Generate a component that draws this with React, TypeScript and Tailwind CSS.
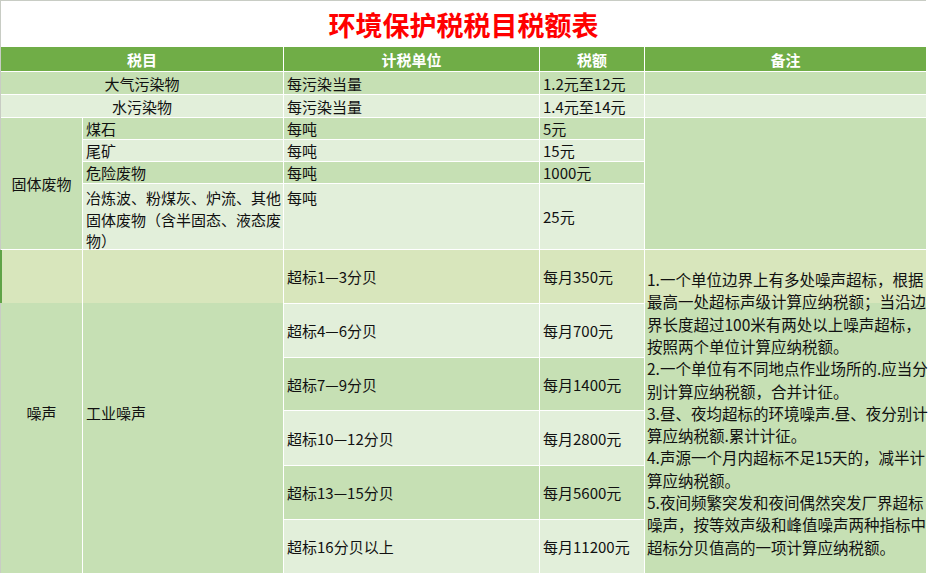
const DARK = 'bg-[#c6e0b4]';
const LIGHT = 'bg-[#e2efda]';
const HI = 'bg-[#d8e6bc]';

const noiseRows = [
  { level: '超标4—6分贝', tax: '每月700元', bg: LIGHT },
  { level: '超标7—9分贝', tax: '每月1400元', bg: DARK },
  { level: '超标10—12分贝', tax: '每月2800元', bg: LIGHT },
  { level: '超标13—15分贝', tax: '每月5600元', bg: DARK },
  { level: '超标16分贝以上', tax: '每月11200元', bg: LIGHT },
];

const notes = [
  '1.一个单位边界上有多处噪声超标，根据',
  '最高一处超标声级计算应纳税额；当沿边',
  '界长度超过100米有两处以上噪声超标，',
  '按照两个单位计算应纳税额。',
  '2.一个单位有不同地点作业场所的.应当分',
  '别计算应纳税额，合并计征。',
  '3.昼、夜均超标的环境噪声.昼、夜分别计',
  '算应纳税额.累计计征。',
  '4.声源一个月内超标不足15天的，减半计',
  '算应纳税额。',
  '5.夜间频繁突发和夜间偶然突发厂界超标',
  '噪声，按等效声级和峰值噪声两种指标中',
  '超标分贝值高的一项计算应纳税额。',
];

const solid = [
  { name: '煤石', tax: '5元', bg: DARK },
  { name: '尾矿', tax: '15元', bg: LIGHT },
  { name: '危险废物', tax: '1000元', bg: DARK },
];

function Cell({ className = '', children }: { className?: string; children?: React.ReactNode }) {
  return <div className={`flex items-center pl-[3px] whitespace-nowrap ${className}`}>{children}</div>;
}

export default function App() {
  return (
    <div
      className="w-[929px] h-[577px] bg-white text-[15px] text-[#111] overflow-hidden"
      style={{ fontFamily: '"Noto Sans CJK SC", "Noto Sans", sans-serif' }}
    >
      <div className="w-[926px] border-t border-l border-[#c8ccc4]">
        {/* title */}
        <div className="h-[46px] flex items-center justify-center pt-[1px]">
          <h1 className="text-[27px] font-bold text-[#ff0000] leading-none">环境保护税税目税额表</h1>
        </div>

        <div className="grid gap-px bg-white grid-cols-[81px_200px_255px_104px_281px] grid-rows-[24px_22px_22px_21px_21px_21px_65px_53px_53px_52px_54px_53px_53px] leading-none">
          {/* header */}
          <div className="col-span-2 bg-[#70ad47] text-white font-bold flex items-center justify-center">税目</div>
          <div className="bg-[#70ad47] text-white font-bold flex items-center justify-center">计税单位</div>
          <div className="bg-[#70ad47] text-white font-bold flex items-center justify-center">税额</div>
          <div className="bg-[#70ad47] text-white font-bold flex items-center justify-center">备注</div>

          {/* air / water */}
          <div className={`col-span-2 flex items-center justify-center ${DARK}`}>大气污染物</div>
          <Cell className={DARK}>每污染当量</Cell>
          <Cell className={DARK}>1.2元至12元</Cell>
          <div className={DARK} />
          <div className={`col-span-2 flex items-center justify-center ${LIGHT}`}>水污染物</div>
          <Cell className={LIGHT}>每污染当量</Cell>
          <Cell className={LIGHT}>1.4元至14元</Cell>
          <div className={LIGHT} />

          {/* solid waste */}
          <div className={`row-span-4 flex items-center justify-center ${DARK}`}>固体废物</div>
          <Cell className={solid[0].bg}>{solid[0].name}</Cell>
          <Cell className={solid[0].bg}>每吨</Cell>
          <Cell className={solid[0].bg}>{solid[0].tax}</Cell>
          <div className={`row-span-4 ${DARK}`} />
          {solid.slice(1).map((r) => (
            <>
              <Cell key={r.name + 'a'} className={r.bg}>{r.name}</Cell>
              <Cell key={r.name + 'b'} className={r.bg}>每吨</Cell>
              <Cell key={r.name + 'c'} className={r.bg}>{r.tax}</Cell>
            </>
          ))}
          <div className={`pl-[3px] pt-[3px] leading-[21.5px] ${LIGHT}`}>
            冶炼波、粉煤灰、炉流、其他
            <br />
            固体废物（含半固态、液态废
            <br />
            物）
          </div>
          <div className={`pl-[3px] pt-[3px] leading-[21.5px] ${LIGHT}`}>每吨</div>
          <Cell className={LIGHT}>25元</Cell>

          {/* noise */}
          <div className="relative row-span-6 flex items-center justify-center pt-[2px] bg-[linear-gradient(to_bottom,#d8e6bc_0px,#d8e6bc_53px,#c6e0b4_53px)]">
            <span className="absolute left-[-1px] top-0 w-[2px] h-[53px] bg-[#5fa347]" />
            噪声
          </div>
          <div className="row-span-6 flex items-center pl-[3px] pt-[2px] bg-[linear-gradient(to_bottom,#d8e6bc_0px,#d8e6bc_53px,#c6e0b4_53px)]">
            工业噪声
          </div>
          <Cell className={HI}>超标1—3分贝</Cell>
          <Cell className={HI}>每月350元</Cell>
          <div className="row-span-6 flex flex-col justify-center pl-[2px] pt-[3px] text-[15.5px] leading-[22.3px] whitespace-nowrap bg-[linear-gradient(to_bottom,#d8e6bc_0px,#d8e6bc_53px,#c6e0b4_53px)]">
            {notes.map((n) => (
              <div key={n}>{n}</div>
            ))}
          </div>
          {noiseRows.map((r) => (
            <>
              <Cell key={r.level} className={r.bg}>{r.level}</Cell>
              <Cell key={r.tax} className={r.bg}>{r.tax}</Cell>
            </>
          ))}
        </div>
      </div>
    </div>
  );
}
